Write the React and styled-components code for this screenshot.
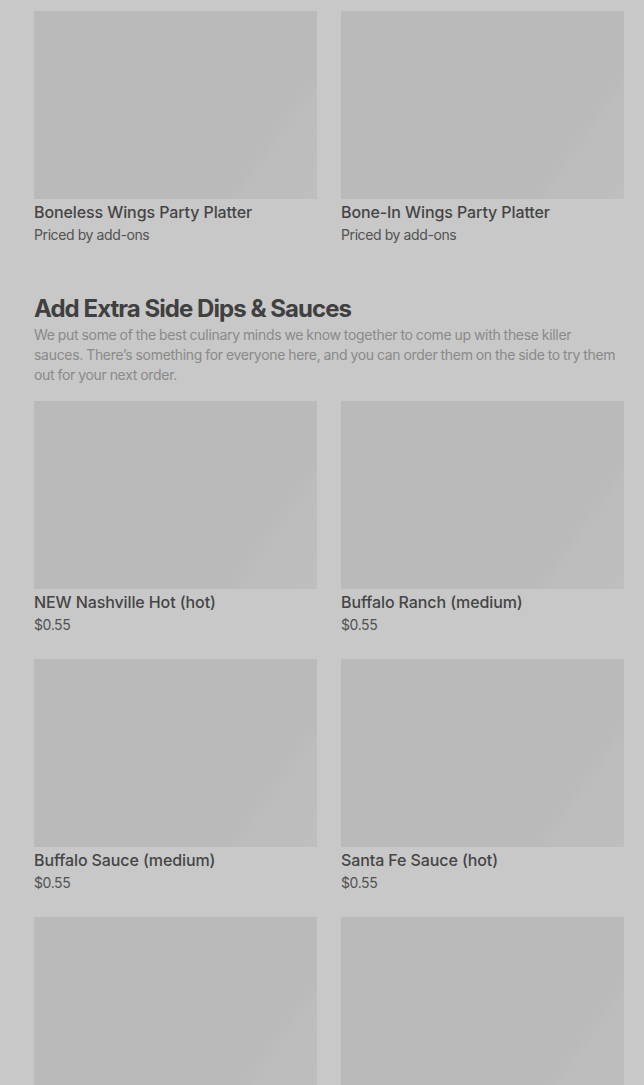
import React from "react";
import styled, { createGlobalStyle } from "styled-components";

const Global = createGlobalStyle`
  html, body { margin: 0; padding: 0; background: #c8c8c8; }
  body { font-family: Inter, "Noto Sans", "Liberation Sans", sans-serif; -webkit-font-smoothing: antialiased; }
`;

const Page = styled.div`
  padding: 11px 20px 0 34px;
  height: 1085px;
  overflow: hidden;
  box-sizing: border-box;
`;

const Section = styled.section`
  & + & { margin-top: 48px; }
`;

const Heading = styled.h2`
  margin: 0;
  font-size: 24px;
  line-height: 32px;
  font-weight: 700;
  letter-spacing: -0.95px;
  color: #404040;
`;

const Description = styled.p`
  margin: 0 0 16px;
  font-size: 14px;
  line-height: 20px;
  color: #8a8a8a;
  letter-spacing: -0.3px;
  word-spacing: -0.5px;
`;

const Grid = styled.div`
  display: grid;
  grid-template-columns: 283px 283px;
  column-gap: 24px;
  row-gap: 24px;
`;

const Card = styled.div`
  display: flex;
  flex-direction: column;
`;

const Thumb = styled.div`
  height: 188px;
  background: linear-gradient(125deg, #bababa 0%, #bababa 78%, #bdbdbd 82%, #bebebe 100%);
`;

const Title = styled.div`
  margin-top: 1px;
  font-size: 16px;
  line-height: 24px;
  font-weight: 500;
  letter-spacing: -0.1px;
  color: #454545;
`;

const Price = styled.div`
  margin-top: 1px;
  font-size: 14px;
  line-height: 20px;
  color: #525252;
  letter-spacing: -0.4px;
`;

const Item = ({ title, price }) => (
  <Card>
    <Thumb />
    <Title>{title}</Title>
    <Price>{price}</Price>
  </Card>
);

const platters = [
  { title: "Boneless Wings Party Platter", price: "Priced by add-ons" },
  { title: "Bone-In Wings Party Platter", price: "Priced by add-ons" },
];

const sauces = [
  { title: "NEW Nashville Hot (hot)", price: "$0.55" },
  { title: "Buffalo Ranch (medium)", price: "$0.55" },
  { title: "Buffalo Sauce (medium)", price: "$0.55" },
  { title: "Santa Fe Sauce (hot)", price: "$0.55" },
  { title: "Garlic Parmesan (mild)", price: "$0.55" },
  { title: "Honey BBQ (mild)", price: "$0.55" },
];

export default function App() {
  return (
    <>
      <Global />
      <Page>
        <Section>
          <Grid>
            {platters.map((p) => (
              <Item key={p.title} {...p} />
            ))}
          </Grid>
        </Section>
        <Section>
          <Heading>Add Extra Side Dips &amp; Sauces</Heading>
          <Description>
            We put some of the best culinary minds we know together to come up with these killer
            <br />
            sauces. There’s something for everyone here, and you can order them on the side to try
            them out for your next order.
          </Description>
          <Grid>
            {sauces.map((p) => (
              <Item key={p.title} {...p} />
            ))}
          </Grid>
        </Section>
      </Page>
    </>
  );
}
